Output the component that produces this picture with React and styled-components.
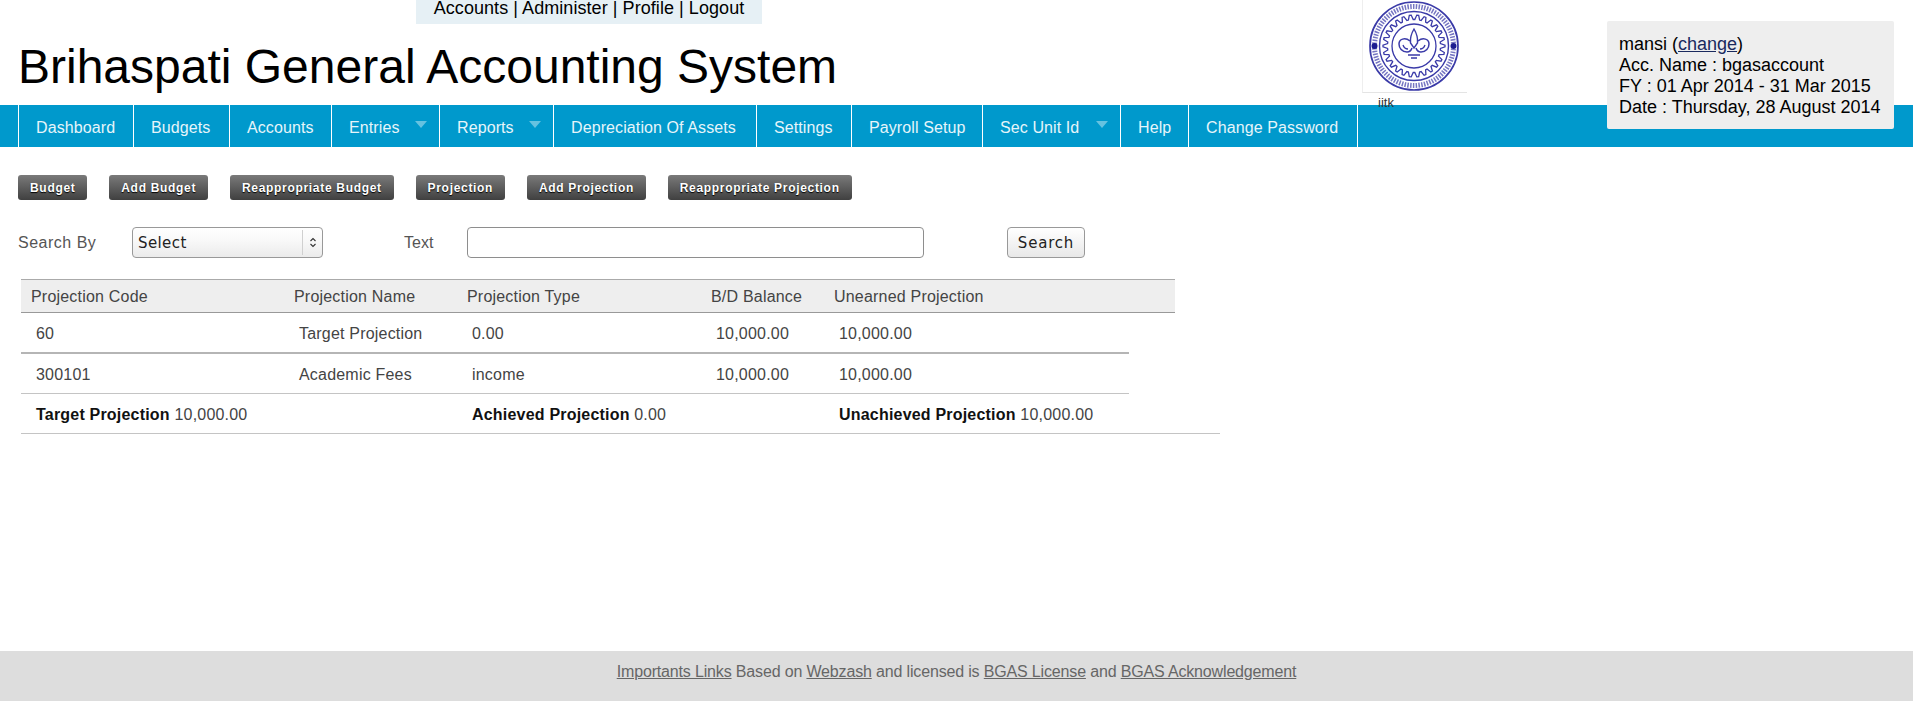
import styled, { createGlobalStyle } from "styled-components";

const GlobalStyle = createGlobalStyle`
  html, body {
    margin: 0;
    padding: 0;
    background: #fff;
    font-family: "Liberation Sans", Arial, sans-serif;
  }
`;

const Page = styled.div`
  display: flex;
  flex-direction: column;
  min-height: 701px;
  height: 100vh;
`;

const Header = styled.header`
  display: flex;
  align-items: flex-start;
  height: 105px;
  color: #000;
`;

const Branding = styled.div`
  flex: 1;
`;

const TopLinks = styled.div`
  width: 346px;
  height: 24px;
  margin-left: 416px;
  background: #e6f0f5;
  font-size: 18px;
  letter-spacing: 0.06px;
  line-height: 16px;
  text-align: center;
`;

const Title = styled.h1`
  margin: 15px 0 0 18px;
  font-size: 48px;
  font-weight: 400;
  line-height: 56px;
`;

const LogoBlock = styled.div`
  position: relative;
  z-index: 1;
  width: 105px;
  margin-right: 140px;
`;

const LogoFrame = styled.div`
  height: 93px;
  padding-left: 5px;
  border-left: 1px solid #eee;
  border-bottom: 1px solid #e4e4e4;
  box-sizing: border-box;
`;

const LogoCaption = styled.div`
  margin: 3px 0 0 16px;
  font-size: 13px;
  line-height: 14px;
  color: #333;
`;

const UserBox = styled.div`
  position: relative;
  z-index: 1;
  width: 287px;
  height: 108px;
  margin: 21px 19px 0 0;
  padding: 13px 12px 0;
  box-sizing: border-box;
  background: #eee;
  border-radius: 2px;
  font-size: 18px;
  line-height: 21px;
  white-space: nowrap;

  a {
    color: #1a2a5e;
    text-decoration: underline;
  }
`;

const Nav = styled.nav`
  display: flex;
  height: 42px;
  padding-left: 18px;
  background: #0099cc;
`;

const NavItem = styled.a`
  display: flex;
  align-items: center;
  box-sizing: border-box;
  width: ${({ $w }) => $w}px;
  padding: 3px 0 0 17px;
  border-left: 1px solid #fff;
  color: #e6f5fa;
  font-size: 16px;
  letter-spacing: 0.1px;
  white-space: nowrap;
  position: relative;

  &:last-child {
    border-right: 1px solid #fff;
  }
`;

const Caret = styled.span`
  position: absolute;
  top: 16px;
  right: 12px;
  width: 0;
  height: 0;
  border-left: 6px solid transparent;
  border-right: 6px solid transparent;
  border-top: 7px solid #66c2e0;
`;

const Content = styled.main`
  padding: 28px 0 0 18px;
`;

const ActionBar = styled.div`
  display: flex;
  gap: 21.8px;
`;

const ActionButton = styled.a`
  display: flex;
  align-items: center;
  height: 25px;
  padding: 0 12px;
  box-sizing: border-box;
  border-radius: 3px;
  background: linear-gradient(#7a7a7a, #404040);
  color: #fff;
  font-size: 12px;
  font-weight: 700;
  letter-spacing: 0.69px;
  text-shadow: 0 1px 1px #000;
  white-space: nowrap;
`;

const SearchRow = styled.form`
  display: flex;
  align-items: center;
  height: 31px;
  margin-top: 27px;
`;

const SearchLabel = styled.label`
  width: ${({ $w }) => $w}px;
  color: #555;
  font-size: 16px;
  letter-spacing: ${({ $spacing }) => $spacing || 0}px;
`;

const SelectBox = styled.div`
  display: flex;
  align-items: center;
  justify-content: space-between;
  box-sizing: border-box;
  width: 191px;
  height: 31px;
  margin-right: 81px;
  padding-left: 5px;
  border: 1px solid #999;
  border-radius: 4px;
  background: linear-gradient(#fff, #f8f8f8 45%, #ebebeb);
  color: #222;
  font-family: "DejaVu Sans", sans-serif;
  font-size: 15px;
  letter-spacing: 0.4px;
`;

const SelectArrows = styled.span`
  display: flex;
  align-items: center;
  justify-content: center;
  width: 19px;
  height: 25px;
  border-left: 1px solid #d0d0d0;
`;

const SearchInput = styled.input`
  box-sizing: border-box;
  width: 457px;
  height: 31px;
  margin-right: 83px;
  border: 1px solid #8e8e8e;
  border-radius: 4px;
  background: #fff;
`;

const SearchButton = styled.button`
  box-sizing: border-box;
  width: 78px;
  height: 31px;
  padding: 0;
  border: 1px solid #999;
  border-radius: 4px;
  background: linear-gradient(#fff, #e8e8e8);
  color: #222;
  font-family: "DejaVu Sans", sans-serif;
  font-size: 15px;
  letter-spacing: 0.8px;
`;

const ProjectionTable = styled.div`
  margin: 21px 0 0 3px;
  color: #444;
  font-size: 16px;
  letter-spacing: 0.2px;
`;

const Row = styled.div`
  display: grid;
  grid-template-columns: 263px 173px 244px 123px 1fr;
  align-items: center;
  box-sizing: border-box;
  width: ${({ $w }) => $w}px;
  height: ${({ $h }) => $h}px;
  padding: 2px 0 0 ${({ $pad }) => $pad}px;
  border-bottom: ${({ $line }) => $line || "1px solid #c4c4c4"};
`;

const HeadRow = styled(Row)`
  background: #eee;
  border-top: 1px solid #aaa;
`;

const Summary = styled.div`
  grid-column: ${({ $col }) => $col};
  white-space: nowrap;

  b {
    color: #111;
  }
`;

const Footer = styled.footer`
  margin-top: auto;
  height: 50px;
  padding-top: 11px;
  box-sizing: border-box;
  background: #ddd;
  color: #666;
  font-size: 16px;
  letter-spacing: -0.16px;
  line-height: 20px;
  text-align: center;

  a {
    color: #666;
    text-decoration: underline;
  }
`;

const gearPath = () => {
  const teeth = 26;
  const points = [];
  for (let i = 0; i < teeth * 4; i++) {
    const r = i % 4 < 2 ? 31 : 26.5;
    const a = ((i - 0.5) / (teeth * 4)) * Math.PI * 2;
    points.push(`${(46 + r * Math.cos(a)).toFixed(1)},${(46 + r * Math.sin(a)).toFixed(1)}`);
  }
  return `M${points.join("L")}Z`;
};

const Logo = () => (
  <svg width="92" height="92" viewBox="0 0 92 92" aria-hidden="true">
    <defs>
      <filter id="soft" x="-5%" y="-5%" width="110%" height="110%">
        <feGaussianBlur stdDeviation="0.6" />
      </filter>
    </defs>
    <g fill="none" stroke="#3a3aa8" filter="url(#soft)">
      <circle cx="46" cy="46" r="44" strokeWidth="1.700" />
      <circle cx="46" cy="46" r="39.500" strokeWidth="5" strokeDasharray="1.500 1.300" opacity="0.7" />
      <circle cx="46" cy="46" r="34.500" strokeWidth="1.400" />
      <path d={gearPath()} strokeWidth="1.300" />
      <circle cx="46" cy="46" r="22" strokeWidth="1.300" />
      <path d="M46 29c-3 5-4 9-3.500 14l3.500 5 3.500-5c.5-5-.5-9-3.500-14z" strokeWidth="1.400" />
      <path d="M42 41c-5-4-11-2-11 3 0 4 3 8 8 8 3 0 4-1 5-4M50 41c5-4 11-2 11 3 0 4-3 8-8 8-3 0-4-1-5-4" strokeWidth="1.500" />
      <path d="M35 45c1 3 3 4 5 4M57 45c-1 3-3 4-5 4M40 55h12M43 58h6" strokeWidth="1.300" />
      <circle cx="6.500" cy="46" r="3" fill="#1c1c90" stroke="none" />
      <circle cx="85.500" cy="46" r="3" fill="#1c1c90" stroke="none" />
    </g>
  </svg>
);

const navItems = [
  ["Dashboard", 115],
  ["Budgets", 96],
  ["Accounts", 102],
  ["Entries", 108, true],
  ["Reports", 114, true],
  ["Depreciation Of Assets", 203],
  ["Settings", 95],
  ["Payroll Setup", 131],
  ["Sec Unit Id", 138, true],
  ["Help", 68],
  ["Change Password", 170],
];

const actions = [
  "Budget",
  "Add Budget",
  "Reappropriate Budget",
  "Projection",
  "Add Projection",
  "Reappropriate Projection",
];

const columns = ["Projection Code", "Projection Name", "Projection Type", "B/D Balance", "Unearned Projection"];

const rows = [
  ["60", "Target Projection", "0.00", "10,000.00", "10,000.00"],
  ["300101", "Academic Fees", "income", "10,000.00", "10,000.00"],
];

const App = () => {
  return (
    <Page>
      <GlobalStyle />
      <Header>
        <Branding>
          <TopLinks>Accounts | Administer | Profile | Logout</TopLinks>
          <Title>Brihaspati General Accounting System</Title>
        </Branding>
        <LogoBlock>
          <LogoFrame>
            <Logo />
          </LogoFrame>
          <LogoCaption>iitk</LogoCaption>
        </LogoBlock>
        <UserBox>
          mansi (<a href="#change">change</a>)
          <br />
          Acc. Name : bgasaccount
          <br />
          FY : 01 Apr 2014 - 31 Mar 2015
          <br />
          Date : Thursday, 28 August 2014
        </UserBox>
      </Header>
      <Nav>
        {navItems.map(([label, width, hasMenu]) => (
          <NavItem key={label} $w={width}>
            {label}
            {hasMenu && <Caret />}
          </NavItem>
        ))}
      </Nav>
      <Content>
        <ActionBar>
          {actions.map((label) => (
            <ActionButton key={label}>{label}</ActionButton>
          ))}
        </ActionBar>
        <SearchRow>
          <SearchLabel $w={114} $spacing={0.5}>
            Search By
          </SearchLabel>
          <SelectBox>
            Select
            <SelectArrows>
              <svg width="8" height="13" viewBox="0 0 8 13" fill="none" stroke="#333" strokeWidth="1.100" aria-hidden="true">
                <path d="M1.500 5 4 2.500 6.500 5M1.500 8 4 10.500 6.500 8" />
              </svg>
            </SelectArrows>
          </SelectBox>
          <SearchLabel $w={63}>Text</SearchLabel>
          <SearchInput type="text" />
          <SearchButton type="button">Search</SearchButton>
        </SearchRow>
        <ProjectionTable>
          <HeadRow $w={1154} $h={34} $pad={10} $line="1px solid #999">
            {columns.map((name) => (
              <div key={name}>{name}</div>
            ))}
          </HeadRow>
          {rows.map((cells, index) => (
            <Row
              key={cells[0]}
              $w={1108}
              $h={index === 0 ? 41 : 40}
              $pad={15}
              $line={index === 0 ? "2px solid #b5b5b5" : undefined}
            >
              {cells.map((cell, cellIndex) => (
                <div key={cellIndex}>{cell}</div>
              ))}
            </Row>
          ))}
          <Row $w={1199} $h={40} $pad={15}>
            <Summary $col="1 / 3">
              <b>Target Projection</b> 10,000.00
            </Summary>
            <Summary $col="3 / 5">
              <b>Achieved Projection</b> 0.00
            </Summary>
            <Summary $col="5">
              <b>Unachieved Projection</b> 10,000.00
            </Summary>
          </Row>
        </ProjectionTable>
      </Content>
      <Footer>
        <a href="#links">Importants Links</a> Based on <a href="#webzash">Webzash</a> and licensed is{" "}
        <a href="#license">BGAS License</a> and <a href="#ack">BGAS Acknowledgement</a>
      </Footer>
    </Page>
  );
};

export default App;
